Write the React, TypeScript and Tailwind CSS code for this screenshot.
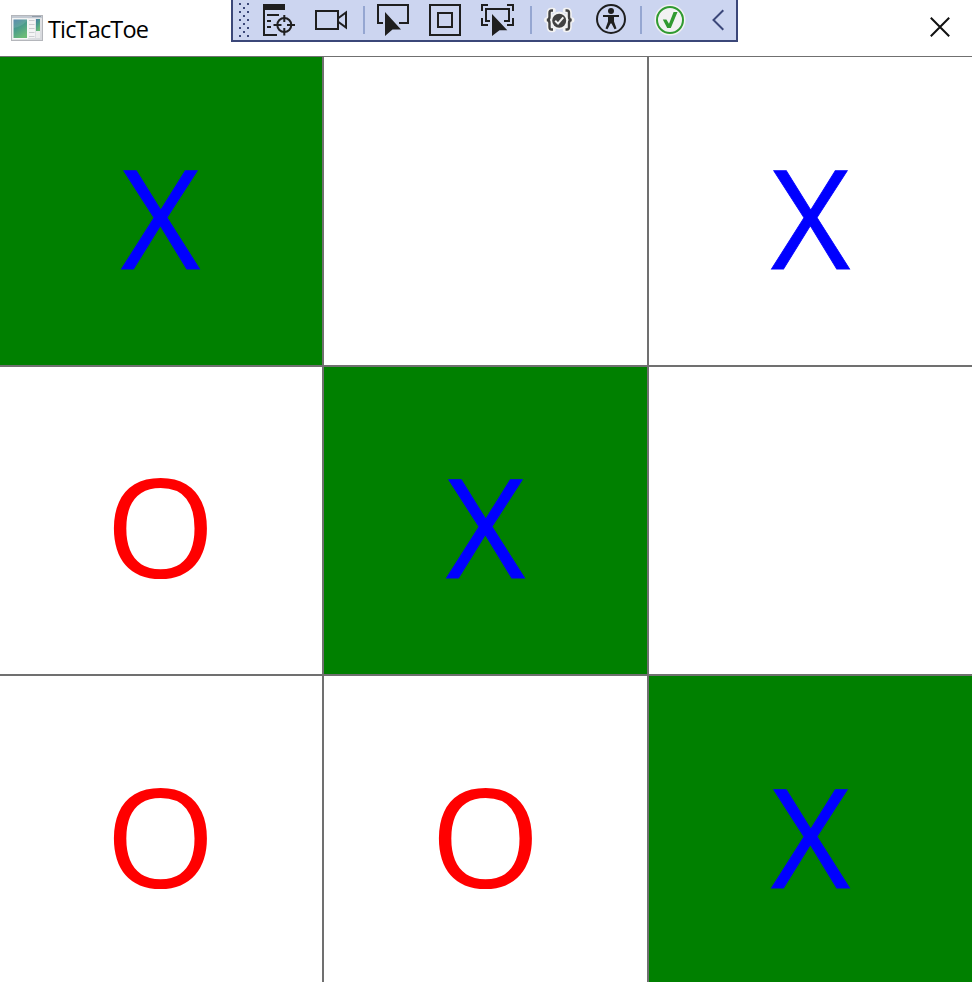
import type { ReactNode } from "react";

type Mark = "X" | "O" | "";

const board: { mark: Mark; win?: boolean }[] = [
  { mark: "X", win: true }, { mark: "" }, { mark: "X" },
  { mark: "O" }, { mark: "X", win: true }, { mark: "" },
  { mark: "O" }, { mark: "O" }, { mark: "X", win: true },
];

const markStyles: Record<Mark, string> = {
  X: "text-[#0000ff] [-webkit-text-stroke:0.8px_#0000ff]",
  O: "text-[#ff0000] scale-x-[1.035]",
  "": "",
};

const INK = "#1f1f1f";
const BRACES =
  "M553 10.5H551.5Q549.5 10.5 549.5 13V17Q549.5 20 546.8 20Q549.5 20 549.5 23V27Q549.5 29.5 551.5 29.5H553M565.5 10.5H567Q569 10.5 569 13V17Q569 20 571.7 20Q569 20 569 23V27Q569 29.5 567 29.5H565.5";

/** One toolbar slot; its drawing uses window coordinates starting at x. */
function Slot({ x, w, children }: { x: number; w: number; children: ReactNode }) {
  return (
    <svg className="block shrink-0" width={w} height={40} viewBox={`${x} 0 ${w} 40`} fill="none" stroke={INK} strokeWidth={2}>
      {children}
    </svg>
  );
}

function Grip() {
  const dots: [number, number][] = [];
  for (let y = 3; y <= 35; y += 8) dots.push([239, y], [247, y]);
  for (let y = 7; y <= 31; y += 8) dots.push([243, y]);
  return (
    <Slot x={233} w={22}>
      {dots.map(([x, y]) => (
        <rect key={`${x}-${y}`} x={x} y={y} width={2} height={2} fill="#3b4779" stroke="none" />
      ))}
    </Slot>
  );
}

function DebugToolbar() {
  return (
    <div className="absolute left-[231px] top-0 flex h-[42px] w-[507px] overflow-hidden border-x-2 border-b-2 border-[#3b4779] bg-[#ccd5f0]">
      <Grip />
      <Slot x={255} w={50}>
        <rect x={263} y={4} width={22} height={6} fill={INK} stroke="none" />
        <path d="M264 9V35H277M267 15H279M267 21H271M267 27H271" />
        <circle cx={284.3} cy={25} r={7} />
        <path d="M273.5 25H281.5M287 25H295M284.3 15V22M284.3 28V35.5" />
      </Slot>
      <Slot x={305} w={50}>
        <path d="M316 11H338V29H316ZM338.5 18L346 12.5V27.5L338.5 22" />
      </Slot>
      <Slot x={355} w={66}>
        <path d="M364 6V34" stroke="#95a6d1" />
        <path d="M383 23H378V5H408V23H399" />
        <path d="M385 12L401 29.5H392.5L385 36Z" fill={INK} stroke="none" />
      </Slot>
      <Slot x={421} w={54}>
        <path d="M430 5H460V35H430ZM438 13H452V27H438Z" />
      </Slot>
      <Slot x={475} w={48}>
        <path d="M488 5H482V11M507 5H513V11M482 18V25H488M507 25H513V18M490 21H486V9H509V21H504" />
        <path d="M492 14L507.3 30.3H499.5L492 36Z" fill={INK} stroke="none" />
      </Slot>
      <Slot x={523} w={64}>
        <path d="M531 6V34" stroke="#95a6d1" />
        <path d={BRACES} stroke="#f3f3f3" strokeWidth={5.5} strokeLinejoin="round" strokeLinecap="round" />
        <circle cx={559.2} cy={20.5} r={9} fill="#f3f3f3" stroke="none" />
        <path d={BRACES} stroke="#424242" strokeWidth={2.4} />
        <circle cx={559.2} cy={20.8} r={7} fill="#424242" stroke="none" />
        <path d="M555.2 20.8L558 23.6L563.3 17.3" stroke="#f3f3f3" />
      </Slot>
      <Slot x={587} w={48}>
        <circle cx={611} cy={19} r={14} />
        <circle cx={611} cy={11} r={3} fill={INK} stroke="none" />
        <path d="M603 16H619" />
        <path d="M608 16H614V21.5L616.5 28.5L614.5 29.3L611.5 23.5H610.5L607.5 29.3L605.5 28.5L608 21.5Z" fill={INK} stroke="none" />
      </Slot>
      <Slot x={635} w={62}>
        <path d="M641 6V34" stroke="#95a6d1" />
        <circle cx={670} cy={20} r={15.5} fill="#f1f2f3" stroke="none" />
        <circle cx={670} cy={20} r={13} stroke="#309a31" />
        <path d="M662.8 19.5H666.4L669 23.8L673.6 12H677.5L670.8 28H667.2Z" fill="#309a31" stroke="none" />
      </Slot>
      <Slot x={697} w={39}>
        <path d="M723.3 10.3L713.5 20L723.3 29.7" stroke="#3b4779" />
      </Slot>
    </div>
  );
}

function AppIcon() {
  return (
    <svg className="block shrink-0" width={32} height={26} viewBox="0 0 32 26">
      <defs>
        <linearGradient id="pane" x1="0" y1="0" x2=".5" y2="1">
          <stop offset="0" stopColor="#477aa5" />
          <stop offset=".5" stopColor="#4a9b8c" />
          <stop offset="1" stopColor="#6bbb78" />
        </linearGradient>
        <linearGradient id="frame" x1="0" y1="0" x2="1" y2="1">
          <stop offset="0" stopColor="#f2f2f2" />
          <stop offset="1" stopColor="#d5d7dc" />
        </linearGradient>
      </defs>
      <rect x=".5" y=".5" width="31" height="25" fill="url(#frame)" stroke="#b4b6bb" />
      <path d="M1 1H31V3H1Z" fill="#c2c9d2" />
      <path d="M21 1.5H30" stroke="#8f9ba8" />
      <rect x="2" y="4" width="14.5" height="19.5" fill="url(#pane)" stroke="#f8f8f8" />
      <path d="M2.5 13Q10 12 16 6V4.5H2.5Z" fill="#fff" opacity=".12" />
      <rect x="17" y="4" width="7" height="19" fill="#f4f4f5" />
      <path d="M18 5.5H23.5M18 9.5H23.5M18 13.5H23.5M18 17.5H23.5M18 21.5H23.5" stroke="#cccdd1" />
      <rect x="25" y="4" width="4" height="12" fill="url(#pane)" />
      <rect x="25" y="16" width="4" height="7" fill="#ececee" />
    </svg>
  );
}

export default function App() {
  return (
    <div className="relative flex h-[982px] w-[972px] flex-col overflow-hidden bg-white font-['Open_Sans','Noto_Sans',sans-serif]">
      <header className="flex h-14 shrink-0 items-center bg-white pl-[11px] pr-[22px]">
        <AppIcon />
        <h1 className="ml-[5px] pt-px text-[23.5px] leading-8 tracking-[-0.85px] text-black">TicTacToe</h1>
        <button className="ml-auto mt-[-2px]" aria-label="Close">
          <svg className="block" width={20} height={20} viewBox="0 0 20 20" stroke="#111" strokeWidth={2}>
            <path d="M.8 .8L19.2 19.2M19.2 .8L.8 19.2" />
          </svg>
        </button>
      </header>
      <main className="grid grow grid-cols-[322px_323px_323px] grid-rows-[308px_307px_306px] gap-[2px] border-t border-[#707070] bg-[#707070]">
        {board.map(({ mark, win }, i) => (
          <div
            key={i}
            className={`flex items-center justify-center overflow-hidden ${i < 6 ? "pt-[10px]" : "pt-[12px]"} ${i % 3 === 0 ? "pr-px" : ""} ${win ? "bg-[#008000]" : "bg-white"}`}
          >
            <span className={`text-[137px] leading-none ${markStyles[mark]}`}>{mark}</span>
          </div>
        ))}
      </main>
      <DebugToolbar />
    </div>
  );
}
